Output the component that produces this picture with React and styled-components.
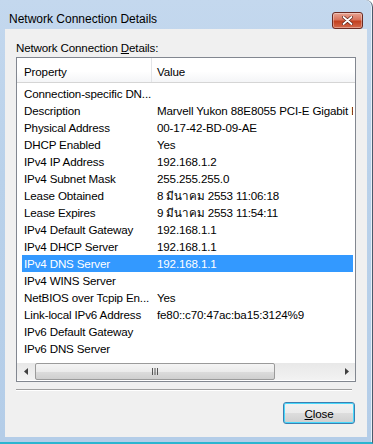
import React from 'react';
import styled, { createGlobalStyle } from 'styled-components';

const GlobalStyle = createGlobalStyle`
  html, body {
    margin: 0;
    padding: 0;
    background: #ffffff;
  }
  body {
    font-family: "Liberation Sans", "Noto Sans", Arial, sans-serif;
  }
`;

const rows = [
  { name: 'Connection-specific DN...', value: '' },
  { name: 'Description', value: 'Marvell Yukon 88E8055 PCI-E Gigabit Ethernet Controller' },
  { name: 'Physical Address', value: '00-17-42-BD-09-AE' },
  { name: 'DHCP Enabled', value: 'Yes' },
  { name: 'IPv4 IP Address', value: '192.168.1.2' },
  { name: 'IPv4 Subnet Mask', value: '255.255.255.0' },
  { name: 'Lease Obtained', value: '8 มีนาคม 2553 11:06:18' },
  { name: 'Lease Expires', value: '9 มีนาคม 2553 11:54:11' },
  { name: 'IPv4 Default Gateway', value: '192.168.1.1' },
  { name: 'IPv4 DHCP Server', value: '192.168.1.1' },
  { name: 'IPv4 DNS Server', value: '192.168.1.1', selected: true },
  { name: 'IPv4 WINS Server', value: '' },
  { name: 'NetBIOS over Tcpip En...', value: 'Yes' },
  { name: 'Link-local IPv6 Address', value: 'fe80::c70:47ac:ba15:3124%9' },
  { name: 'IPv6 Default Gateway', value: '' },
  { name: 'IPv6 DNS Server', value: '' }
];

const uiFont = `
  font-size: 11.6px;
  letter-spacing: -0.15px;
`;

const Window = styled.div`
  width: 373px;
  height: 444px;
  box-sizing: border-box;
  display: flex;
  flex-direction: column;
  background: linear-gradient(180deg, #c4d8ee 0%, #b9d1ea 40%, #b4cde8 100%);
  border-top-right-radius: 7px;
  border-right: 1px solid #4a5a6c;
  border-bottom: 2px solid #2bb5d0;
  box-shadow: inset -1px 0 0 #e8f0f8;
  padding: 0 5px 5px 5px;
  overflow: hidden;
`;

const TitleBar = styled.div`
  height: 29px;
  box-sizing: border-box;
  display: flex;
  align-items: flex-start;
  justify-content: space-between;
  padding: 12px 4px 0 4px;
`;

const Title = styled.div`
  font-size: 12px;
  line-height: 15px;
  color: #000;
`;

const CloseX = styled.div`
  width: 29px;
  height: 15px;
  border: 1px solid #6b2a22;
  border-radius: 3px;
  background: linear-gradient(180deg, #e8a493 0%, #d9735c 45%, #c2401f 55%, #d46a4d 100%);
  box-shadow: inset 0 0 0 1px rgba(255, 255, 255, 0.35);
  display: flex;
  align-items: center;
  justify-content: center;
`;

const Client = styled.div`
  flex: 1;
  background: #f0f0f0;
  padding: 10px 11px 0 11px;
  display: flex;
  flex-direction: column;
`;

const Label = styled.div`
  ${uiFont}
  color: #000;
  height: 18px;
  line-height: 17px;

  u {
    text-decoration: underline;
  }
`;

const ListBox = styled.div`
  height: 325px;
  box-sizing: border-box;
  border: 1px solid #828790;
  background: #ffffff;
  display: flex;
  flex-direction: column;
  overflow: hidden;
`;

const Header = styled.div`
  height: 25px;
  box-sizing: border-box;
  display: grid;
  grid-template-columns: 135px 1fr;
  background: linear-gradient(180deg, #ffffff 0%, #ffffff 55%, #f4f5f7 100%);
  border-bottom: 1px solid #d5d5d5;
  ${uiFont}
`;

const HeaderCell = styled.div`
  display: flex;
  align-items: center;
  padding-left: ${(p) => p.$pad}px;
  padding-top: 2px;
  border-right: ${(p) => (p.$divider ? '1px solid #e3e5e8' : 'none')};
  color: #000;
`;

const Rows = styled.div`
  flex: 1;
  padding: 2px 2px 0 5px;
`;

const Row = styled.div`
  height: 17px;
  display: grid;
  grid-template-columns: 130px 1fr;
  ${uiFont}
  line-height: 17px;
  white-space: nowrap;
  background: ${(p) => (p.$selected ? '#3399ff' : 'transparent')};
  color: ${(p) => (p.$selected ? '#ffffff' : '#000000')};
`;

const Cell = styled.div`
  padding-left: ${(p) => p.$pad}px;
  overflow: hidden;
`;

const ScrollBar = styled.div`
  height: 17px;
  margin: 0 0 1px 0;
  display: flex;
  align-items: stretch;
  background: linear-gradient(180deg, #e8e8e8 0%, #f2f2f2 100%);
`;

const Arrow = styled.div`
  width: 17px;
  display: flex;
  align-items: center;
  justify-content: center;
`;

const Track = styled.div`
  flex: 1;
  display: flex;
  align-items: stretch;
  padding: 0 1px;
`;

const Thumb = styled.div`
  width: 240px;
  box-sizing: border-box;
  border: 1px solid #9a9a9a;
  border-radius: 2px;
  background: linear-gradient(180deg, #f4f4f4 0%, #ebebeb 50%, #dcdcdc 51%, #cfcfcf 100%);
  display: flex;
  align-items: center;
  justify-content: center;
`;

const Separator = styled.div`
  height: 1px;
  margin: 7px 4px 0 0;
  background: #a0a0a0;
  border-bottom: 1px solid #ffffff;
`;

const Footer = styled.div`
  display: flex;
  justify-content: flex-end;
  padding: 11px 1px 0 0;
`;

const Button = styled.button`
  width: 72px;
  height: 22px;
  box-sizing: border-box;
  border: 1px solid #3c7fb1;
  border-radius: 3px;
  background: linear-gradient(180deg, #f2f2f2 0%, #ebebeb 50%, #dddddd 51%, #cfcfcf 100%);
  box-shadow: inset 0 0 0 1px #48d8fb;
  font-family: "Liberation Sans", Arial, sans-serif;
  ${uiFont}
  color: #000;
  padding: 0;

  u {
    text-decoration: underline;
  }
`;

function XGlyph() {
  return (
    <svg width="11" height="9" viewBox="0 0 11 9">
      <path d="M1.5 1 L9.5 8 M9.5 1 L1.5 8" stroke="#5a2016" strokeWidth="3.2" strokeLinecap="round" />
      <path d="M1.5 1 L9.5 8 M9.5 1 L1.5 8" stroke="#ffffff" strokeWidth="1.8" strokeLinecap="round" />
    </svg>
  );
}

function Grip() {
  return (
    <svg width="8" height="7" viewBox="0 0 8 7">
      <path d="M1.5 0 V7 M4 0 V7 M6.5 0 V7" stroke="#555" strokeWidth="1" />
    </svg>
  );
}

export default function App() {
  return (
    <>
      <GlobalStyle />
      <Window>
        <TitleBar>
          <Title>Network Connection Details</Title>
          <CloseX>
            <XGlyph />
          </CloseX>
        </TitleBar>
        <Client>
          <Label>
            Network Connection <u>D</u>etails:
          </Label>
          <ListBox>
            <Header>
              <HeaderCell $pad={7} $divider>Property</HeaderCell>
              <HeaderCell $pad={5}>Value</HeaderCell>
            </Header>
            <Rows>
              {rows.map((r) => (
                <Row key={r.name} $selected={r.selected}>
                  <Cell $pad={2}>{r.name}</Cell>
                  <Cell $pad={5}>{r.value}</Cell>
                </Row>
              ))}
            </Rows>
            <ScrollBar>
              <Arrow>
                <svg width="4" height="7" viewBox="0 0 4 7">
                  <path d="M4 0 L0 3.5 L4 7 Z" fill="#404040" />
                </svg>
              </Arrow>
              <Track>
                <Thumb>
                  <Grip />
                </Thumb>
              </Track>
              <Arrow>
                <svg width="4" height="7" viewBox="0 0 4 7">
                  <path d="M0 0 L4 3.5 L0 7 Z" fill="#404040" />
                </svg>
              </Arrow>
            </ScrollBar>
          </ListBox>
          <Separator />
          <Footer>
            <Button>
              <u>C</u>lose
            </Button>
          </Footer>
        </Client>
      </Window>
    </>
  );
}
